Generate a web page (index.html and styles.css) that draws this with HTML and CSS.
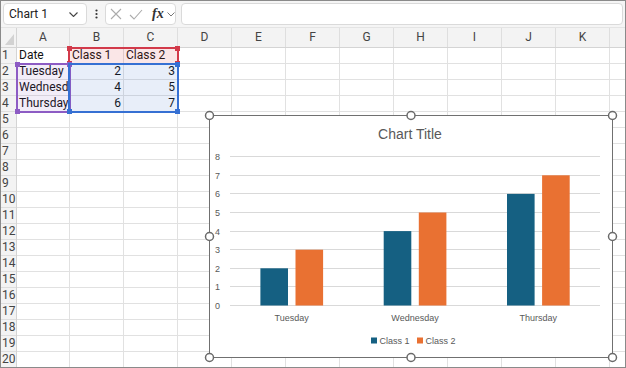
FILE: index.html
```html
<!DOCTYPE html>
<html lang="en">
<head>
    <meta charset="UTF-8">
    <meta name="viewport" content="width=device-width, initial-scale=1.0">
    <title>Chart 1</title>
    <link rel="stylesheet" href="styles.css">
</head>
<body>
    <div class="window">
        <!-- name box + formula bar -->
        <div class="toolbar">
            <div class="name-box">
                <span>Chart 1</span>
                <svg width="9" height="5" viewBox="0 0 9 5"><path d="M0.5 0.5 L4.5 4.5 L8.5 0.5" fill="none" stroke="#444" stroke-width="1.1"/></svg>
            </div>
            <div class="more">
                <svg width="3" height="10" viewBox="0 0 3 10"><circle cx="1.5" cy="1.5" r="1.1" fill="#333"/><circle cx="1.5" cy="5" r="1.1" fill="#333"/><circle cx="1.5" cy="8.5" r="1.1" fill="#333"/></svg>
            </div>
            <div class="fx-group">
                <svg class="ico-x" width="12" height="12" viewBox="0 0 12 12"><path d="M1 1 L11 11 M11 1 L1 11" stroke="#ababab" stroke-width="1.1"/></svg>
                <svg class="ico-ok" width="14" height="11" viewBox="0 0 14 11"><path d="M1 6 L5 10 L13 1" fill="none" stroke="#ababab" stroke-width="1.1"/></svg>
                <span class="fx">fx</span>
                <svg width="8" height="5" viewBox="0 0 8 5"><path d="M0.5 0.5 L4 4 L7.5 0.5" fill="none" stroke="#777" stroke-width="1"/></svg>
            </div>
            <div class="formula"></div>
        </div>

        <div class="sheet">
            <div class="corner"></div>
            <div class="col-heads">
                <div>A</div><div>B</div><div>C</div><div>D</div><div>E</div><div>F</div>
                <div>G</div><div>H</div><div>I</div><div>J</div><div>K</div><div></div>
            </div>
            <div class="row-heads">
                <div>1</div><div>2</div><div>3</div><div>4</div><div>5</div>
                <div>6</div><div>7</div><div>8</div><div>9</div><div>10</div>
                <div>11</div><div>12</div><div>13</div><div>14</div><div>15</div>
                <div>16</div><div>17</div><div>18</div><div>19</div><div>20</div>
            </div>

            <div class="cells">
                <div class="row">
                    <div class="cell">Date</div><div class="cell">Class 1</div><div class="cell">Class 2</div>
                </div>
                <div class="row">
                    <div class="cell">Tuesday</div><div class="cell num">2</div><div class="cell num">3</div>
                </div>
                <div class="row">
                    <div class="cell">Wednesday</div><div class="cell num">4</div><div class="cell num">5</div>
                </div>
                <div class="row">
                    <div class="cell">Thursday</div><div class="cell num">6</div><div class="cell num">7</div>
                </div>

                <!-- ranges referenced by the chart -->
                <div class="range range-series"><span class="h tl"></span><span class="h tr"></span><span class="h bl"></span><span class="h br"></span></div>
                <div class="range range-cats"><span class="h tl"></span><span class="h tr"></span><span class="h bl"></span><span class="h br"></span></div>
                <div class="range range-values"><span class="h tr"></span><span class="h bl"></span><span class="h br"></span></div>

                <div class="chart">
                    <svg width="404" height="243" viewBox="0 0 404 243">
                        <rect x="0.5" y="0.5" width="403" height="242" fill="#fff" stroke="#707070"/>
                        <text class="title" x="201" y="24" text-anchor="middle">Chart Title</text>

                        <g stroke="#d9d9d9" stroke-width="1">
                            <line x1="21" y1="41.5" x2="391" y2="41.5"/>
                            <line x1="21" y1="60.5" x2="391" y2="60.5"/>
                            <line x1="21" y1="78.5" x2="391" y2="78.5"/>
                            <line x1="21" y1="97.5" x2="391" y2="97.5"/>
                            <line x1="21" y1="116.5" x2="391" y2="116.5"/>
                            <line x1="21" y1="134.5" x2="391" y2="134.5"/>
                            <line x1="21" y1="153.5" x2="391" y2="153.5"/>
                            <line x1="21" y1="171.5" x2="391" y2="171.5"/>
                            <line x1="21" y1="190.5" x2="391" y2="190.5"/>
                        </g>

                        <g text-anchor="end">
                            <text x="11" y="44.5">8</text>
                            <text x="11" y="63.5">7</text>
                            <text x="11" y="81.5">6</text>
                            <text x="11" y="100.5">5</text>
                            <text x="11" y="119.5">4</text>
                            <text x="11" y="137.5">3</text>
                            <text x="11" y="156.5">2</text>
                            <text x="11" y="174.5">1</text>
                            <text x="11" y="193.5">0</text>
                        </g>

                        <g fill="#156082">
                            <rect x="51.4" y="153.3" width="27.6" height="37.2"/>
                            <rect x="174.7" y="116.1" width="27.6" height="74.4"/>
                            <rect x="298" y="78.9" width="27.6" height="111.6"/>
                        </g>
                        <g fill="#e97132">
                            <rect x="86.5" y="134.7" width="27.6" height="55.8"/>
                            <rect x="209.8" y="97.5" width="27.6" height="93"/>
                            <rect x="333.1" y="60.3" width="27.6" height="130.2"/>
                        </g>

                        <g text-anchor="middle">
                            <text x="82.7" y="206">Tuesday</text>
                            <text x="206" y="206">Wednesday</text>
                            <text x="329.3" y="206">Thursday</text>
                        </g>

                        <rect x="162" y="222.5" width="6" height="6" fill="#156082"/>
                        <text x="170.5" y="229">Class 1</text>
                        <rect x="208" y="222.5" width="6" height="6" fill="#e97132"/>
                        <text x="216.5" y="229">Class 2</text>

                        <g fill="#fff" stroke="#6a6a6a" stroke-width="1.5">
                            <circle cx="0.5" cy="0.5" r="4"/>
                            <circle cx="202" cy="0.5" r="4"/>
                            <circle cx="403.5" cy="0.5" r="4"/>
                            <circle cx="0.5" cy="121.5" r="4"/>
                            <circle cx="403.5" cy="121.5" r="4"/>
                            <circle cx="0.5" cy="242.5" r="4"/>
                            <circle cx="202" cy="242.5" r="4"/>
                            <circle cx="403.5" cy="242.5" r="4"/>
                        </g>
                    </svg>
                </div>
            </div>
        </div>
    </div>
</body>
</html>
```

FILE: styles.css
```css
* {
    box-sizing: border-box;
}

body {
    margin: 0;
    background: #fff;
    font-family: Roboto, "Liberation Sans", sans-serif;
}

.window {
    width: 626px;
    height: 368px;
    border: 1px solid #8a8a8a;
    overflow: hidden;
    display: flex;
    flex-direction: column;
}

/* top bar */
.toolbar {
    height: 27px;
    flex: none;
    display: flex;
    align-items: center;
    padding-left: 2px;
    background: #f5f5f5;
    border-bottom: 1px solid #e4e4e4;
}

.name-box {
    width: 84px;
    height: 22px;
    display: flex;
    align-items: center;
    justify-content: space-between;
    padding: 0 8px 0 5px;
    background: #fff;
    border: 1px solid #dadada;
    border-radius: 4px;
    font-size: 12px;
    color: #222;
}

.more {
    width: 18px;
    display: flex;
    justify-content: center;
}

.fx-group {
    width: 71px;
    height: 22px;
    display: flex;
    align-items: center;
    padding-left: 4px;
    background: #fff;
    border: 1px solid #dadada;
    border-radius: 4px;
}

.ico-ok {
    margin-left: 7px;
}

.fx {
    margin: 0 3px 0 9px;
    font-family: "Liberation Serif", serif;
    font-style: italic;
    font-weight: bold;
    font-size: 14px;
    color: #333;
    line-height: 1;
}

.formula {
    flex: 1;
    height: 22px;
    margin: 0 2px 0 5px;
    background: #fff;
    border: 1px solid #dadada;
    border-radius: 4px;
}

/* grid */
.sheet {
    flex: 1;
    display: grid;
    grid-template-columns: 16px 1fr;
    grid-template-rows: 20px 1fr;
}

.corner {
    position: relative;
    background: #f3f3f3;
    border-right: 1px solid #d4d4d4;
    border-bottom: 1px solid #d4d4d4;
}

.corner::after {
    content: "";
    position: absolute;
    right: 2px;
    bottom: 2px;
    width: 9px;
    height: 11px;
    background: #d2d2d2;
    clip-path: polygon(100% 0, 100% 100%, 0 100%);
}

.col-heads {
    display: flex;
    overflow: hidden;
    background: #f3f3f3;
    border-bottom: 1px solid #d4d4d4;
}

.col-heads div {
    flex: none;
    width: 54px;
    border-right: 1px solid #dedede;
    text-align: center;
    font-size: 12px;
    line-height: 19px;
    color: #444;
}

.col-heads div:first-child {
    width: 53px;
}

.row-heads {
    background: #f3f3f3;
    border-right: 1px solid #d4d4d4;
}

.row-heads div {
    height: 16px;
    padding-left: 1px;
    border-bottom: 1px solid #dedede;
    font-size: 12px;
    line-height: 15px;
    color: #444;
    white-space: nowrap;
}

.cells {
    position: relative;
    background-image:
        repeating-linear-gradient(to right, transparent 0 53px, #e1e1e1 53px 54px),
        repeating-linear-gradient(to bottom, transparent 0 15px, #e1e1e1 15px 16px);
    background-position: -1px 0, 0 0;
}

.row {
    display: grid;
    grid-template-columns: 53px 54px 54px;
    height: 16px;
}

.cell {
    padding: 0 3px 0 2px;
    font-size: 12px;
    line-height: 15px;
    color: #111;
    white-space: nowrap;
    overflow: hidden;
}

.num {
    text-align: right;
}

/* highlighted source ranges */
.range {
    position: absolute;
    border: 2px solid;
}

.range-series {
    left: 51px;
    top: -1px;
    width: 111px;
    height: 18px;
    border-color: #d23a4a;
    background: rgba(220, 60, 70, 0.13);
}

.range-cats {
    left: -1px;
    top: 15px;
    width: 55px;
    height: 50px;
    border-color: #8d5cc4;
    background: rgba(130, 80, 190, 0.1);
}

.range-values {
    left: 51px;
    top: 15px;
    width: 111px;
    height: 50px;
    border-color: #3670d3;
    background: rgba(50, 100, 200, 0.11);
}

.h {
    position: absolute;
    width: 5px;
    height: 5px;
}

.range-series .h { background: #d23a4a; }
.range-cats .h { background: #8d5cc4; }
.range-values .h { background: #3670d3; }

.h.tl { left: -3px; top: -3px; }
.h.tr { right: -3px; top: -3px; }
.h.bl { left: -3px; bottom: -3px; }
.h.br { right: -3px; bottom: -3px; }

/* chart object */
.chart {
    position: absolute;
    left: 192px;
    top: 67px;
}

.chart svg {
    display: block;
    overflow: visible;
}

.chart text {
    font-family: "Liberation Sans", Arial, sans-serif;
    font-size: 9px;
    fill: #595959;
}

.chart .title {
    font-size: 14px;
}
```
